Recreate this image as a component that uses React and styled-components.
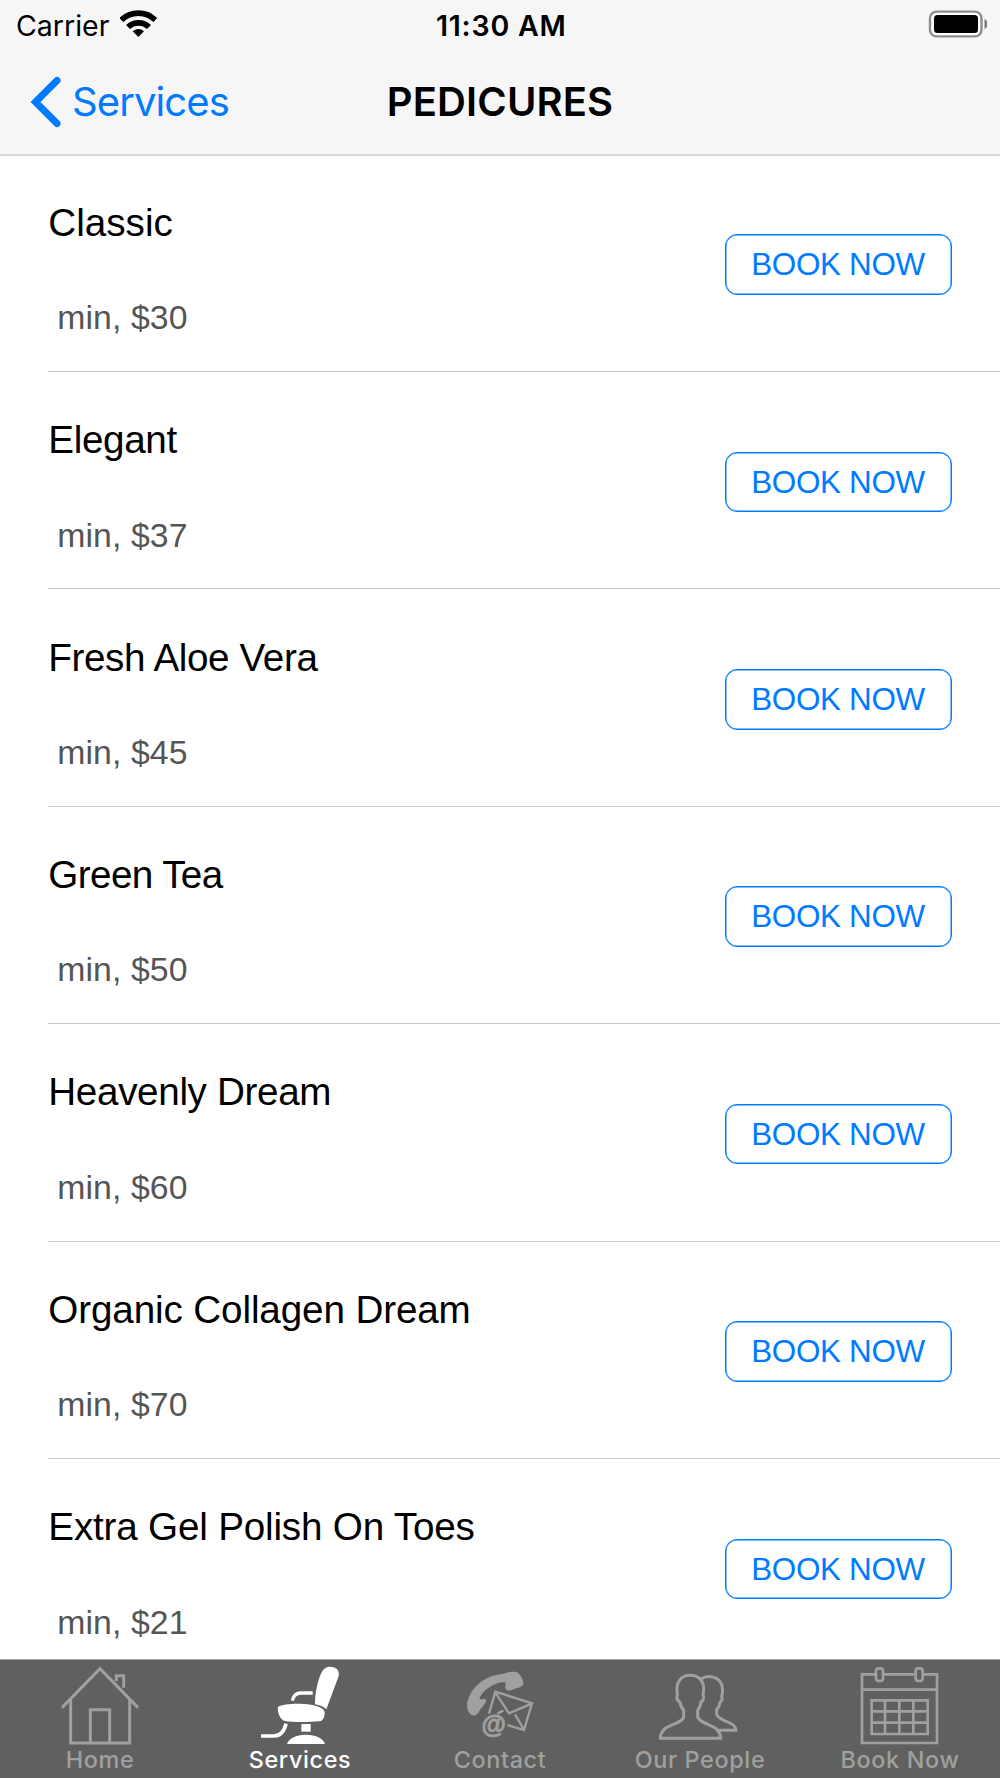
import React, { useState } from 'react';
import styled, { createGlobalStyle } from 'styled-components';

const GlobalStyle = createGlobalStyle`
    * {
        box-sizing: border-box;
    }

    body {
        margin: 0;
        background: #fff;
    }
`;

const Screen = styled.div`
    display: flex;
    flex-direction: column;
    width: 1000px;
    height: 1778px;
    overflow: hidden;
    background: #fff;
    font-family: 'Liberation Sans', Arial, sans-serif;
`;

const Header = styled.header`
    flex: none;
    height: 154px;
    background: #f7f6f7;
    box-shadow: 0 2px 0 #d9d8d9;
    font-family: Inter, sans-serif;
    z-index: 1;
`;

const StatusBar = styled.div`
    display: grid;
    grid-template-columns: 1fr auto 1fr;
    height: 50px;
    padding: 0 13.5px 0 16px;
    color: #000;
    font-size: 28.5px;
    line-height: 51px;
`;

const Network = styled.div`
    display: flex;
    gap: 11px;
    letter-spacing: 0;

    svg {
        margin-top: 9px;
    }
`;

const Time = styled.div`
    font-weight: 570;
    letter-spacing: 0.8px;
`;

const BatterySlot = styled.div`
    display: flex;
    justify-content: flex-end;

    svg {
        margin-top: 10px;
    }
`;

const NavBar = styled.nav`
    display: grid;
    grid-template-columns: 1fr auto 1fr;
    height: 104px;
    padding: 0 30px;
    line-height: 104px;
`;

const BackButton = styled.button`
    display: flex;
    align-items: flex-start;
    gap: 11px;
    padding: 0;
    border: none;
    background: none;
    color: #007aff;
    font: inherit;
    font-size: 40px;
    letter-spacing: -0.9px;
    cursor: pointer;

    svg {
        margin-top: 26px;
    }
`;

const NavTitle = styled.h1`
    margin: 0;
    font-size: 40px;
    font-weight: 600;
    line-height: 104px;
    letter-spacing: 0.15px;
`;

const ServiceList = styled.ul`
    flex: 1;
    min-height: 0;
    margin: 0;
    padding: 0.65px 0 0;
    overflow: hidden;
    list-style: none;
`;

const ServiceRow = styled.li`
    display: flex;
    justify-content: space-between;
    align-items: flex-start;
    height: 217.39px;
    margin-left: 48.3px;
    padding-right: 48.5px;
    border-bottom: 1px solid #c8c7cc;
`;

const ServiceInfo = styled.div`
    display: flex;
    flex-direction: column;
    gap: 51.4px;
    padding-top: 45.3px;
`;

const ServiceName = styled.span`
    color: #000;
    font-size: 38.65px;
    line-height: 46px;
    letter-spacing: ${props => props.$tracking}px;
`;

const ServiceDetail = styled.span`
    color: #555;
    font-size: 33.8px;
    line-height: 40px;
    margin-left: -0.6px;
    letter-spacing: 0.1px;
    white-space: pre;
`;

const BookButton = styled.button`
    width: 227px;
    height: 60.5px;
    margin-top: 79.7px;
    padding: 0;
    border: 1px solid #007aff;
    border-radius: 12px;
    box-shadow: inset 0 0 0 0.5px #007aff;
    background: #fff;
    color: #007aff;
    font-family: inherit;
    font-size: 31.4px;
    line-height: 59px;
    letter-spacing: -0.3px;
    cursor: pointer;
`;

const TabBar = styled.nav`
    display: grid;
    grid-template-columns: repeat(5, 1fr);
    flex: none;
    height: 119px;
    border-top: 1px solid #a5a5a5;
    background: #5f605f;
`;

const Tab = styled.button`
    display: flex;
    flex-direction: column;
    align-items: center;
    padding: 0;
    border: none;
    background: none;
    color: ${props => (props.$active ? '#fff' : '#a0a0a0')};
    font-family: Inter, sans-serif;
    font-size: 23.4px;
    font-weight: 500;
    line-height: 29px;
    letter-spacing: 0.65px;
    cursor: pointer;
`;

const WifiIcon = () => (
    <svg width="37" height="28" viewBox="360 28 111 84">
        <g fill="none" stroke="#000" strokeWidth="17">
            <path d="M364 61a73 73 0 0 1 102 0" />
            <path d="M384 82a46 46 0 0 1 63 0" />
        </g>
        <path d="M398 95q17-14 34 0l-17 17z" fill="#000" />
    </svg>
);

const BatteryIcon = () => (
    <svg width="60" height="28" viewBox="0 0 60 28">
        <rect x="3" y="1.6" width="51.500" height="24.800" rx="6.5" fill="#fff" stroke="#8e8e8e" strokeWidth="2.4" />
        <rect x="7" y="5" width="44" height="18" rx="3.5" fill="#000" />
        <path d="M57.500 9q3 1.500 3 5t-3 5z" fill="#777" />
    </svg>
);

const BackIcon = () => (
    <svg width="31" height="52" viewBox="0 0 31 52">
        <path d="M27 4.500 5.500 26 27 47.500" fill="none" stroke="#007aff" strokeWidth="7" strokeLinecap="round" />
    </svg>
);

const HomeIcon = () => (
    <svg width="120" height="85" viewBox="0 15 360 255" fill="none" stroke="currentColor" strokeWidth="9">
        <path d="M66 158 180 41l114 117" />
        <path d="M92 132v132h177V132M151 264V164h58v100" />
        <path d="M229 78V62h22v36" />
    </svg>
);

const ChairIcon = () => (
    <svg width="120" height="85" viewBox="0 15 360 255" fill="currentColor">
        <path d="M225 148c0-34 7-68 19-94 9-19 23-21 37-17 14 4 18 17 14 29l-36 97c-8-8-20-12-34-15z" />
        <path d="M114 155c18-10 66-11 98-6 24 4 42 12 42 24 0 15-6 25-17 26-33 3-78 3-103-1-13-5-23-25-20-43z" />
        <path d="M157 137c3-14 10-23 26-23h35" fill="none" stroke="currentColor" strokeWidth="10" />
        <path d="M138 206c-5 23-15 37-36 37H63" fill="none" stroke="currentColor" strokeWidth="11" />
        <path d="M184 207h28v23h-28z" />
        <path d="M141 267c4-16 27-28 57-28s53 12 57 28z" />
    </svg>
);

const ContactIcon = () => (
    <svg width="120" height="85" viewBox="0 15 360 255" fill="none" stroke="currentColor" strokeWidth="7">
        <path
            d="M88 174C78 160 80 140 88 124C102 90 140 60 190 56C205 50 228 48 234 54C244 62 251 78 250 88C246 98 232 98 218 104C208 108 198 108 196 100C194 92 200 84 194 82C165 80 128 106 118 130C122 138 138 126 138 136C138 146 124 158 116 172C110 184 94 184 88 174Z"
            fill="currentColor"
            stroke="none"
        />
        <path d="m147 176 19-66 110 35-24 80-50-15" />
        <path d="m168 115 39 60 68-29M225 178l26 44M190 167l-18 9" />
        <text
            x="161"
            y="235"
            fill="currentColor"
            strokeWidth="2.500"
            fontFamily="Liberation Sans"
            fontSize="75"
            fontWeight="700"
            letterSpacing="0"
            textAnchor="middle"
        >
            @
        </text>
    </svg>
);

const PeopleIcon = () => (
    <svg width="160" height="85" viewBox="0 15 480 255" fill="none" stroke="currentColor" strokeWidth="9">
        <path d="M121 250c0-20 11-31 32-39 20-8 36-14 38-25v-21c-7-6-10-16-11-24-8-4-11-13-8-22-6-37 10-58 38-58s48 20 39 58c4 9 1 18-6 22-1 10-5 18-10 26v19c3 11 18 17 37 25 21 8 32 19 32 39z" />
        <path d="M242 72c22-13 51-8 62 14 5 12 4 27 1 38 3 8 1 14-5 18-1 10-5 16-10 22v15c5 11 17 15 30 21 19 7 27 13 28 26h-59" />
    </svg>
);

const CalendarIcon = () => (
    <svg width="140" height="85" viewBox="0 15 420 255" fill="none" stroke="currentColor" strokeWidth="8">
        <path d="M135 58H96v206h225V58h-40M161 58h93M96 104h225" />
        <rect x="138" y="40" width="21" height="38" rx="8" />
        <rect x="257" y="40" width="21" height="38" rx="8" />
        <path d="M125 136h168v101H125zM125 169h168M125 203h168M165 136v101M208 136v101M250 136v101" />
    </svg>
);

const services = [
    { name: 'Classic', price: 30, tracking: 0 },
    { name: 'Elegant', price: 37, tracking: -0.35 },
    { name: 'Fresh Aloe Vera', price: 45, tracking: -0.38 },
    { name: 'Green Tea', price: 50, tracking: -0.6 },
    { name: 'Heavenly Dream', price: 60, tracking: -0.35 },
    { name: 'Organic Collagen Dream', price: 70, tracking: -0.13 },
    { name: 'Extra Gel Polish On Toes', price: 21, tracking: -0.19 },
];

const tabs = [
    { label: 'Home', Icon: HomeIcon },
    { label: 'Services', Icon: ChairIcon },
    { label: 'Contact', Icon: ContactIcon },
    { label: 'Our People', Icon: PeopleIcon },
    { label: 'Book Now', Icon: CalendarIcon },
];

const App = () => {
    const [activeTab, setActiveTab] = useState('Services');

    return (
        <Screen>
            <GlobalStyle />
            <Header>
                <StatusBar>
                    <Network>
                        Carrier
                        <WifiIcon />
                    </Network>
                    <Time>11:30 AM</Time>
                    <BatterySlot>
                        <BatteryIcon />
                    </BatterySlot>
                </StatusBar>
                <NavBar>
                    <BackButton>
                        <BackIcon />
                        Services
                    </BackButton>
                    <NavTitle>PEDICURES</NavTitle>
                </NavBar>
            </Header>
            <ServiceList>
                {services.map(service => (
                    <ServiceRow key={service.name}>
                        <ServiceInfo>
                            <ServiceName $tracking={service.tracking}>{service.name}</ServiceName>
                            <ServiceDetail>{` min, $${service.price}`}</ServiceDetail>
                        </ServiceInfo>
                        <BookButton>BOOK NOW</BookButton>
                    </ServiceRow>
                ))}
            </ServiceList>
            <TabBar>
                {tabs.map(({ label, Icon }) => (
                    <Tab key={label} $active={label === activeTab} onClick={() => setActiveTab(label)}>
                        <Icon />
                        {label}
                    </Tab>
                ))}
            </TabBar>
        </Screen>
    );
};

export default App;
